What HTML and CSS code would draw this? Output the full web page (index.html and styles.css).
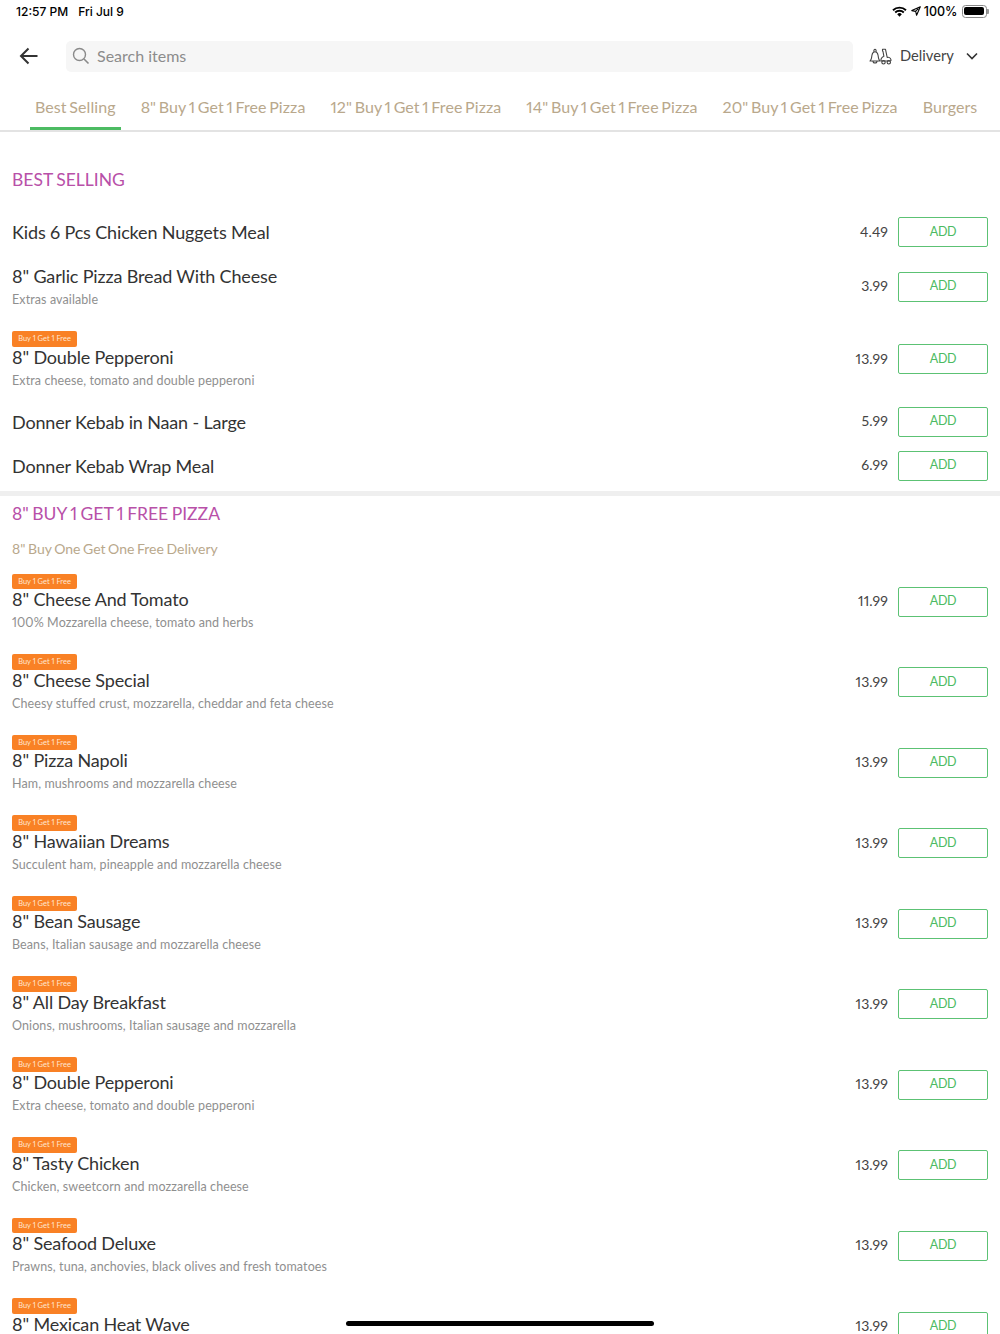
FILE: index.html
```html
<!DOCTYPE html>
<html lang="en">
<head>
<meta charset="utf-8">
<title>Menu</title>
<link rel="stylesheet" href="styles.css">
</head>
<body>
<div class="page">
  <div class="status">
    <div class="status-left"><span>12:57 PM</span><span>Fri Jul 9</span></div>
    <div class="status-right">
      <svg class="ic-wifi" width="15" height="11" viewBox="0 0 15 11"><path d="M1 4.2a9.4 9.4 0 0 1 13 0M3.2 6.5a6.2 6.2 0 0 1 8.6 0" fill="none" stroke="#000" stroke-width="1.9"/><path d="M5.2 8.2a3.2 3.2 0 0 1 4.6 0L7.5 10.7z" fill="#000"/></svg>
      <svg class="ic-loc" width="10" height="10" viewBox="0 0 10 10"><path d="M9.3.7 .8 4.6l3.9.8.9 3.9zM7.4 2.6 4.9 4.9" fill="none" stroke="#000" stroke-width="1.1" stroke-linejoin="round"/></svg>
      <span class="pct">100%</span>
      <span class="battery"><span class="battery-fill"></span></span>
    </div>
  </div>
  <header class="top">
    <svg class="back" width="20" height="18" viewBox="0 0 20 18"><path d="M18.5 9H2M9.5 1.5 2 9l7.5 7.5" fill="none" stroke="#333" stroke-width="2"/></svg>
    <div class="search">
      <svg width="18" height="18" viewBox="0 0 18 18"><circle cx="7.5" cy="7.5" r="6" fill="none" stroke="#8a8a8a" stroke-width="1.4"/><path d="m12 12 4.5 4.5" stroke="#8a8a8a" stroke-width="1.6" fill="none"/></svg>
      <span>Search items</span>
    </div>
    <div class="mode">
      <svg width="23" height="17" viewBox="0 0 23 17" fill="none" stroke="#444" stroke-width="1.1" stroke-linejoin="round"><path d="M1 13c.7-.8 1.300-1.500 1.500-3l.5-3C3.400 5 4.600 3.800 6 3.800S8.600 5 9 7l.5 3c.2 1.500.8 2.200 1.500 3z"/><path d="M4.800 3.800C4.800 2 5.300 1.300 6 1.300s1.200.7 1.200 2.500M4 13a2 2 0 0 0 4 0"/><path d="M13.500 1.300h3l1.700 8.200c1.500-.6 3.300.2 3.800 2.300.2.900-.2 1.200-1 1.200h-9c-.3-2 .8-3.800 2.900-4.700l-1-5.300h-.4z"/><circle cx="14.500" cy="14.300" r="1.700"/><circle cx="19.800" cy="14.300" r="1.700"/></svg>
      <span>Delivery</span>
      <svg width="12" height="8" viewBox="0 0 12 8"><path d="m1 1.500 5 5 5-5" fill="none" stroke="#333" stroke-width="1.600"/></svg>
    </div>
  </header>
  <nav class="tabs">
    <a class="tab active">Best Selling</a>
    <a class="tab">8" Buy 1 Get 1 Free Pizza</a>
    <a class="tab">12" Buy 1 Get 1 Free Pizza</a>
    <a class="tab">14" Buy 1 Get 1 Free Pizza</a>
    <a class="tab">20" Buy 1 Get 1 Free Pizza</a>
    <a class="tab">Burgers</a>
  </nav>
  <section class="section first">
    <h2>BEST SELLING</h2>
    <div class="row"><div class="info"><div class="name">Kids 6 Pcs Chicken Nuggets Meal</div></div><div class="price">4.49</div><button class="add">ADD</button></div>
    <div class="row"><div class="info"><div class="name">8" Garlic Pizza Bread With Cheese</div><div class="desc">Extras available</div></div><div class="price">3.99</div><button class="add">ADD</button></div>
    <div class="row"><div class="info"><span class="badge">Buy 1 Get 1 Free</span><div class="name">8" Double Pepperoni</div><div class="desc">Extra cheese, tomato and double pepperoni</div></div><div class="price">13.99</div><button class="add">ADD</button></div>
    <div class="row"><div class="info"><div class="name">Donner Kebab in Naan - Large</div></div><div class="price">5.99</div><button class="add">ADD</button></div>
    <div class="row"><div class="info"><div class="name">Donner Kebab Wrap Meal</div></div><div class="price">6.99</div><button class="add">ADD</button></div>
  </section>
  <section class="section">
    <h2>8" BUY 1 GET 1 FREE PIZZA</h2>
    <p class="sub">8" Buy One Get One Free Delivery</p>
    <div class="row"><div class="info"><span class="badge">Buy 1 Get 1 Free</span><div class="name">8" Cheese And Tomato</div><div class="desc">100% Mozzarella cheese, tomato and herbs</div></div><div class="price">11.99</div><button class="add">ADD</button></div>
    <div class="row"><div class="info"><span class="badge">Buy 1 Get 1 Free</span><div class="name">8" Cheese Special</div><div class="desc">Cheesy stuffed crust, mozzarella, cheddar and feta cheese</div></div><div class="price">13.99</div><button class="add">ADD</button></div>
    <div class="row"><div class="info"><span class="badge">Buy 1 Get 1 Free</span><div class="name">8" Pizza Napoli</div><div class="desc">Ham, mushrooms and mozzarella cheese</div></div><div class="price">13.99</div><button class="add">ADD</button></div>
    <div class="row"><div class="info"><span class="badge">Buy 1 Get 1 Free</span><div class="name">8" Hawaiian Dreams</div><div class="desc">Succulent ham, pineapple and mozzarella cheese</div></div><div class="price">13.99</div><button class="add">ADD</button></div>
    <div class="row"><div class="info"><span class="badge">Buy 1 Get 1 Free</span><div class="name">8" Bean Sausage</div><div class="desc">Beans, Italian sausage and mozzarella cheese</div></div><div class="price">13.99</div><button class="add">ADD</button></div>
    <div class="row"><div class="info"><span class="badge">Buy 1 Get 1 Free</span><div class="name">8" All Day Breakfast</div><div class="desc">Onions, mushrooms, Italian sausage and mozzarella</div></div><div class="price">13.99</div><button class="add">ADD</button></div>
    <div class="row"><div class="info"><span class="badge">Buy 1 Get 1 Free</span><div class="name">8" Double Pepperoni</div><div class="desc">Extra cheese, tomato and double pepperoni</div></div><div class="price">13.99</div><button class="add">ADD</button></div>
    <div class="row"><div class="info"><span class="badge">Buy 1 Get 1 Free</span><div class="name">8" Tasty Chicken</div><div class="desc">Chicken, sweetcorn and mozzarella cheese</div></div><div class="price">13.99</div><button class="add">ADD</button></div>
    <div class="row"><div class="info"><span class="badge">Buy 1 Get 1 Free</span><div class="name">8" Seafood Deluxe</div><div class="desc">Prawns, tuna, anchovies, black olives and fresh tomatoes</div></div><div class="price">13.99</div><button class="add">ADD</button></div>
    <div class="row"><div class="info last"><span class="badge">Buy 1 Get 1 Free</span><div class="name">8" Mexican Heat Wave</div></div><div class="price">13.99</div><button class="add">ADD</button></div>
  </section>
  <div class="home-bar"></div>
</div>
</body>
</html>
```
FILE: styles.css
```css
* { box-sizing: border-box; }
html, body { margin: 0; padding: 0; height: 1334px; overflow: hidden; background: #fff; }
body { font-family: "Lato", "Liberation Sans", sans-serif; color: #333; font-variant-numeric: proportional-nums; }
.page { position: relative; width: 1000px; height: 1334px; overflow: hidden; }

.status { height: 24px; padding: 0 13px 2px 16px; display: flex; justify-content: space-between; align-items: center; font-family: "Inter", sans-serif; font-size: 12px; font-weight: 500; color: #000; }
.status-left { display: flex; gap: 10px; }
.status-right { display: flex; align-items: center; gap: 3px; }
.pct { font-size: 12.500px; font-weight: 500; }
.ic-wifi { margin-right: 1px; }
.battery { position: relative; width: 25px; height: 13px; border: 1px solid #888; border-radius: 3.5px; padding: 1.5px; margin: 0 .5px 0 1px; display: flex; }
.battery::after { content: ""; position: absolute; right: -3px; top: 3px; width: 1.500px; height: 5px; background: #999; border-radius: 0 1px 1px 0; }
.battery-fill { flex: 1; background: #000; border-radius: 2px; }

.top { height: 64px; display: flex; align-items: center; padding: 0 23px 0 19px; }
.back { flex: none; margin-right: 27px; }
.search { flex: none; width: 787px; height: 31px; background: #f6f6f6; border-radius: 5px; display: flex; align-items: center; gap: 7px; padding-left: 6px; color: #8c8c8c; font-size: 16px; line-height: 18px; }
.search span { height: 18px; }
.mode { display: flex; align-items: center; margin-left: 16px; font-size: 14.700px; line-height: 18px; color: #444; }
.mode span { height: 20px; margin: 0 12px 0 8px; }

.tabs { height: 44px; display: flex; gap: 14px; padding-left: 29.500px; border-bottom: 2px solid #e3e3e3; overflow: hidden; white-space: nowrap; }
.tab { flex: none; padding: 9px 5.500px 0; height: 42px; color: #b9a88c; font-size: 16px; letter-spacing: .08px; word-spacing: -1.500px; border-bottom: 3px solid transparent; }
.tab.active { border-bottom-color: #4cbb62; }

.section { border-top: 5px solid #efefef; padding: 0 12px; }
.section.first { border-top: 0; padding-top: 36px; padding-bottom: 3px; }
h2 { margin: 0; font-size: 17.500px; line-height: 24px; font-weight: 400; color: #b850a8; word-spacing: -1px; }
.first h2 { margin-bottom: 18px; }
.section:not(.first) h2 { margin-top: 6px; }
.sub { margin: 15px 0 3px; font-size: 14px; line-height: 16px; color: #b9a88c; height: 18px; word-spacing: -1px; }
.row { display: flex; align-items: center; }
.info { flex: 1; min-width: 0; padding: 12px 0 10px; }
.info.last { padding-bottom: 31.500px; }
.name { height: 22px; font-size: 18px; line-height: 20px; color: #333; letter-spacing: -.15px; white-space: nowrap; }
.desc { margin-top: 3px; font-size: 12.500px; line-height: 18px; color: #8f8f8f; letter-spacing: .1px; white-space: nowrap; }
.badge { display: block; width: 65px; height: 15.500px; line-height: 15px; border-radius: 2px; background: #f98125; color: #ffe6d2; font-size: 7.500px; text-align: center; }
.price { font-size: 14px; color: #444; margin: -2px 10px 0 0; letter-spacing: .1px; }
.add { width: 90px; height: 30px; flex: none; background: #fff; border: 1px solid #5cc274; border-radius: 2px; color: #4cbb62; font: inherit; font-size: 12.500px; letter-spacing: -.4px; padding: 0 0 2px; }
.home-bar { position: absolute; left: 346px; top: 1321px; width: 308px; height: 5px; background: #000; border-radius: 3px; }
```
